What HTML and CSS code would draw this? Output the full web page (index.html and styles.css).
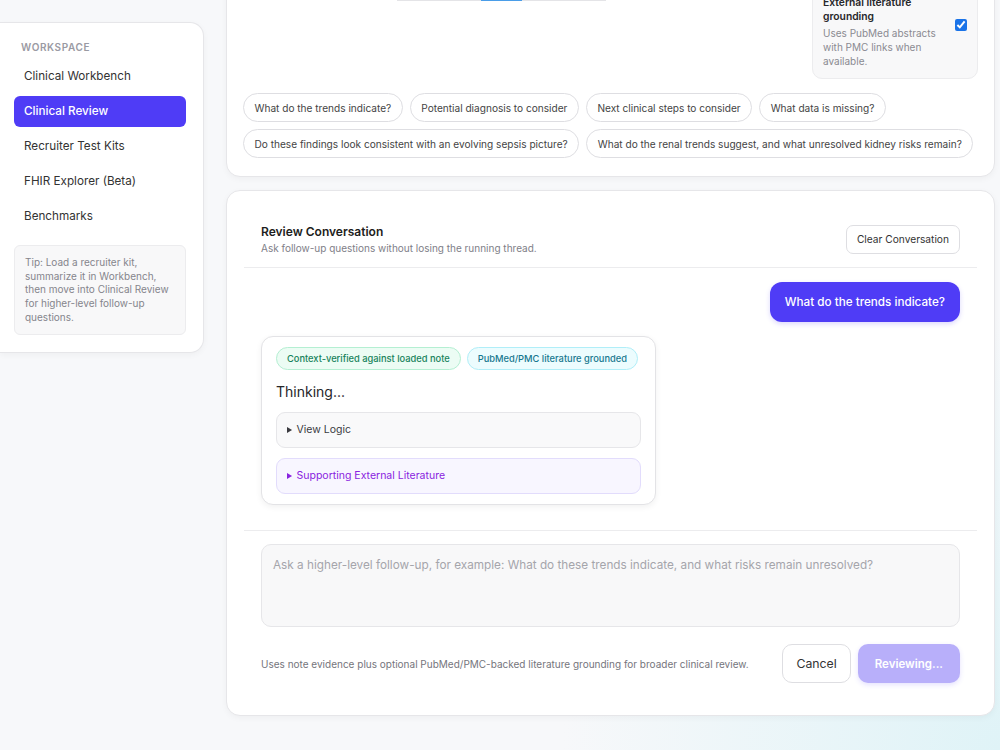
FILE: index.html
```html
<!DOCTYPE html>
<html lang="en">
<head>
  <meta charset="UTF-8">
  <meta name="viewport" content="width=device-width, initial-scale=1.0">
  <title>Clinical Review</title>
  <link rel="stylesheet" href="styles.css">
</head>
<body>

  <!-- Sidebar -->
  <aside class="sidebar">
    <p class="side-label">WORKSPACE</p>
    <nav class="side-nav">
      <a class="side-link">Clinical Workbench</a>
      <a class="side-link active">Clinical Review</a>
      <a class="side-link">Recruiter Test Kits</a>
      <a class="side-link">FHIR Explorer (Beta)</a>
      <a class="side-link">Benchmarks</a>
    </nav>
    <div class="side-tip">
      Tip: Load a recruiter kit, summarize it in Workbench, then move into Clinical Review for higher-level follow-up questions.
    </div>
  </aside>

  <main class="main">

    <!-- Review setup -->
    <section class="card setup-card">
      <div class="setup-row">
        <div class="setup-left">
          <div class="tabs">
            <span class="tab"></span>
            <span class="tab active"></span>
            <span class="tab"></span>
          </div>
        </div>
        <label class="grounding">
          <div class="grounding-text">
            <strong>External literature grounding</strong>
            <span>Uses PubMed abstracts with PMC links when available.</span>
          </div>
          <input type="checkbox" checked>
        </label>
      </div>
      <div class="chips">
        <button class="chip">What do the trends indicate?</button>
        <button class="chip">Potential diagnosis to consider</button>
        <button class="chip">Next clinical steps to consider</button>
        <button class="chip">What data is missing?</button>
        <button class="chip">Do these findings look consistent with an evolving sepsis picture?</button>
        <button class="chip">What do the renal trends suggest, and what unresolved kidney risks remain?</button>
      </div>
    </section>

    <!-- Conversation -->
    <section class="card convo-card">
      <div class="convo-head">
        <div>
          <h3>Review Conversation</h3>
          <p>Ask follow-up questions without losing the running thread.</p>
        </div>
        <button class="btn-outline small">Clear Conversation</button>
      </div>

      <div class="thread">
        <div class="bubble-user">What do the trends indicate?</div>
        <div class="bubble-bot">
          <div class="badges">
            <span class="badge green">Context-verified against loaded note</span>
            <span class="badge cyan">PubMed/PMC literature grounded</span>
          </div>
          <p class="thinking">Thinking...</p>
          <details class="fold">
            <summary>View Logic</summary>
          </details>
          <details class="fold purple">
            <summary>Supporting External Literature</summary>
          </details>
        </div>
      </div>

      <div class="composer">
        <textarea placeholder="Ask a higher-level follow-up, for example: What do these trends indicate, and what risks remain unresolved?"></textarea>
        <div class="composer-foot">
          <p>Uses note evidence plus optional PubMed/PMC-backed literature grounding for broader clinical review.</p>
          <div class="actions">
            <button class="btn-outline">Cancel</button>
            <button class="btn-primary" disabled>Reviewing...</button>
          </div>
        </div>
      </div>
    </section>

  </main>

</body>
</html>
```

FILE: styles.css
```css
* {
  margin: 0;
  padding: 0;
  box-sizing: border-box;
}
body {
  font-family: Inter, "Liberation Sans", Arial, sans-serif;
  color: #222;
  background: radial-gradient(circle at 100% 100%, #dff3f7 0%, rgba(223, 243, 247, 0) 35%), #f7f8fa;
  height: 750px;
  overflow: hidden;
  display: flex;
  gap: 22px;
  align-items: flex-start;
}
button, textarea, input {
  font-family: inherit;
}

/* Sidebar */
.sidebar {
  width: 204px;
  flex-shrink: 0;
  margin-top: 22px;
  background: white;
  border: 1px solid #e6e6e9;
  border-left: none;
  border-radius: 0 14px 14px 0;
  box-shadow: 0 2px 6px rgba(0, 0, 0, 0.04);
  padding: 18px 17px 17px 14px;
}
.side-label {
  font-size: 10px;
  font-weight: 600;
  letter-spacing: 0.06em;
  color: #9a9aa3;
  padding-left: 7px;
  margin-bottom: 8px;
}
.side-nav {
  display: flex;
  flex-direction: column;
  gap: 4px;
}
.side-link {
  display: block;
  font-size: 11.7px;
  line-height: 15px;
  color: #333;
  padding: 8px 10px;
  border-radius: 6px;
}
.side-link.active {
  background: #4f3cf6;
  color: white;
  font-weight: 500;
}
.side-tip {
  margin-top: 13px;
  background: #f8f8f9;
  border: 1px solid #ececee;
  border-radius: 6px;
  padding: 10px;
  font-size: 10px;
  line-height: 1.37;
  color: #85858c;
}

/* Main */
.main {
  flex: 1;
  padding-right: 5px;
  margin-top: -33px;
  display: flex;
  flex-direction: column;
  gap: 13px;
}
.card {
  background: white;
  border: 1px solid #e6e6e9;
  border-radius: 14px;
  box-shadow: 0 2px 6px rgba(0, 0, 0, 0.04);
}

/* Setup card */
.setup-card {
  padding: 16px 14px 18px 16px;
}
.setup-row {
  display: flex;
  gap: 12px;
  padding-right: 2px;
}
.setup-left {
  flex: 1;
}
.tabs {
  display: flex;
  margin-left: 154px;
  width: 209px;
  height: 17px;
  border-bottom: 1px solid #e4e4e7;
}
.tab {
  flex: 1;
}
.tab.active {
  flex: 0 0 41px;
  border-bottom: 2px solid #4a9de8;
  margin-bottom: -1px;
}
.grounding {
  width: 166px;
  display: flex;
  align-items: center;
  gap: 8px;
  background: #f8f8f9;
  border: 1px solid #ececee;
  border-radius: 10px;
  padding: 10px;
}
.grounding-text {
  flex: 1;
  display: flex;
  flex-direction: column;
  gap: 3px;
}
.grounding-text strong {
  font-size: 10.3px;
  font-weight: 600;
  line-height: 14px;
  color: #27272a;
}
.grounding-text span {
  font-size: 10px;
  line-height: 14px;
  color: #8a8a91;
}
.grounding input {
  width: 12px;
  height: 12px;
  accent-color: #1a73e8;
  margin-bottom: 14px;
}
.chips {
  display: flex;
  flex-wrap: wrap;
  gap: 7px;
  margin-top: 14px;
}
.chip {
  background: white;
  border: 1px solid #dedee2;
  border-radius: 999px;
  padding: 0 10.5px;
  height: 29px;
  font-size: 10.1px;
  color: #444;
  white-space: nowrap;
}

/* Conversation card */
.convo-card {
  padding: 16px 17px;
}
.convo-head {
  display: flex;
  justify-content: space-between;
  align-items: center;
  padding: 17px 17px 13px;
  border-bottom: 1px solid #ececee;
}
.convo-head h3 {
  font-size: 12px;
  font-weight: 600;
  color: #1d1d20;
}
.convo-head p {
  font-size: 10px;
  color: #808088;
  margin-top: 3px;
}
.btn-outline {
  background: white;
  border: 1px solid #dedee2;
  border-radius: 10px;
  height: 39px;
  padding: 0 13px;
  font-size: 12.3px;
  color: #333;
}
.btn-outline.small {
  height: 29px;
  border-radius: 7px;
  font-size: 10.2px;
  padding: 0 10px;
}
.thread {
  display: flex;
  flex-direction: column;
  padding: 14px 17px 25px;
  gap: 14px;
}
.bubble-user {
  align-self: flex-end;
  background: #4f3cf6;
  color: white;
  font-size: 11.7px;
  font-weight: 500;
  padding: 0 15px;
  height: 40px;
  line-height: 40px;
  border-radius: 12px;
  box-shadow: 0 2px 5px rgba(79, 60, 246, 0.2);
}
.bubble-bot {
  width: 395px;
  background: white;
  border: 1px solid #e3e3e6;
  border-radius: 12px;
  box-shadow: 0 2px 6px rgba(0, 0, 0, 0.06);
  padding: 10px 14px 10px;
}
.badges {
  display: flex;
  gap: 6px;
}
.badge {
  font-size: 9.3px;
  font-weight: 500;
  height: 23px;
  line-height: 21px;
  padding: 0 10px;
  border-radius: 999px;
  border: 1px solid;
  white-space: nowrap;
}
.badge.green {
  background: #ecfcf4;
  border-color: #b4efd2;
  color: #17835b;
}
.badge.cyan {
  background: #ecfcfe;
  border-color: #b0eef8;
  color: #17788f;
}
.thinking {
  font-size: 14px;
  color: #26262a;
  margin: 13px 0 12px;
}
.fold {
  background: #f9f9fa;
  border: 1px solid #e6e6e9;
  border-radius: 9px;
  height: 36px;
  padding: 0 10px;
  font-size: 10.5px;
  color: #3a3a3f;
}
.fold + .fold {
  margin-top: 10px;
}
.fold summary {
  line-height: 34px;
  cursor: pointer;
}
.fold summary::marker {
  font-size: 9px;
}
.fold.purple {
  background: #f8f6ff;
  border-color: #e2dcfc;
  color: #8a23e0;
}

/* Composer */
.composer {
  border-top: 1px solid #ececee;
  padding: 13px 17px 16px;
}
.composer textarea {
  display: block;
  width: 100%;
  height: 83px;
  resize: none;
  background: #f8f8f9;
  border: 1px solid #e6e6e9;
  border-radius: 10px;
  padding: 13px 11px;
  font-size: 11.75px;
  color: #333;
}
.composer textarea::placeholder {
  color: #a5a5ab;
}
.composer-foot {
  display: flex;
  align-items: center;
  justify-content: space-between;
  margin-top: 17px;
}
.composer-foot p {
  font-size: 10px;
  color: #75757c;
}
.actions {
  display: flex;
  gap: 7px;
}
.btn-primary {
  background: #b8affa;
  color: white;
  border: none;
  border-radius: 10px;
  height: 39px;
  padding: 0 17px;
  font-size: 11.5px;
  font-weight: 600;
  box-shadow: 0 2px 5px rgba(79, 60, 246, 0.15);
}
```
